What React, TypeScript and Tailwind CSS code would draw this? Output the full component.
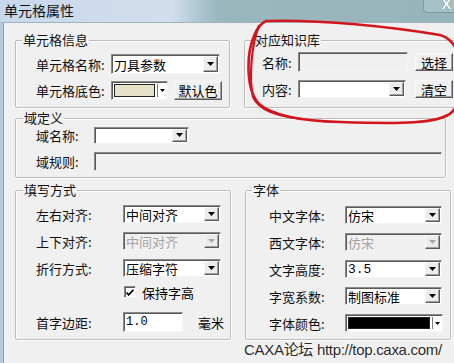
import React from "react";

const sunken =
  "border border-t-[#8a8a8a] border-l-[#8a8a8a] border-r-[#f4f4f4] border-b-[#f4f4f4] shadow-[inset_1px_1px_0_#5a5a5a]";
const raised =
  "border border-t-[#f8f8f8] border-l-[#f8f8f8] border-r-[#5a5a5a] border-b-[#5a5a5a] shadow-[inset_-1px_-1px_0_#a0a0a0]";

function Arrow({ disabled = false }: { disabled?: boolean }) {
  return (
    <svg width="7" height="4" viewBox="0 0 7 4">
      <path d="M0 0h7L3.5 4z" fill={disabled ? "#a8a8a8" : "#000"} />
    </svg>
  );
}

function Combo({
  w,
  h = 18,
  text = "",
  disabled = false,
  mono = false,
}: {
  w: number;
  h?: number;
  text?: string;
  disabled?: boolean;
  mono?: boolean;
}) {
  return (
    <div
      className={`flex shrink-0 items-stretch ${sunken} ${disabled ? "bg-[#f0f0f0]" : "bg-white"}`}
      style={{ width: w, height: h }}
    >
      <div
        className={`flex flex-1 items-center pl-[2px] text-[13px] leading-none ${
          disabled ? "text-[#a3a3a3]" : "text-black"
        } ${mono ? "font-['Liberation_Mono',monospace] text-[12px]" : ""}`}
      >
        {text}
      </div>
      <div className={`m-[1px] flex w-[15px] items-center justify-center bg-[#ececec] ${raised}`}>
        <Arrow disabled={disabled} />
      </div>
    </div>
  );
}

function ColorCombo({ w, h, color }: { w: number; h: number; color: string }) {
  return (
    <div className={`flex shrink-0 items-stretch bg-white ${sunken}`} style={{ width: w, height: h }}>
      <div className="flex flex-1 items-center px-[2px] py-[2px]">
        <div className="h-full w-full border border-[#222]" style={{ background: color }} />
      </div>
      <div className="my-[2px] w-px bg-[#7a7a7a]" />
      <div className="flex w-[9px] items-center justify-center">
        <svg width="5" height="3" viewBox="0 0 5 3">
          <path d="M0 0h5L2.5 3z" fill="#000" />
        </svg>
      </div>
    </div>
  );
}

function Button({ w, h, label }: { w: number; h: number; label: string }) {
  return (
    <div
      className={`flex shrink-0 items-center justify-center bg-[#f0f0f0] text-[13px] leading-none ${raised}`}
      style={{ width: w, height: h }}
    >
      {label}
    </div>
  );
}

function Group({
  title,
  w,
  legendMl,
  className = "",
  children,
}: {
  title: string;
  w: number;
  legendMl: string;
  className?: string;
  children: React.ReactNode;
}) {
  return (
    <fieldset
      className={`shrink-0 rounded-[2px] border border-[#bcbcbc] shadow-[1px_1px_0_#fff,inset_1px_1px_0_#fff] ${className}`}
      style={{ width: w }}
    >
      <legend className={`${legendMl} px-[1px] text-[13px] leading-[16px] text-[#111]`}>{title}</legend>
      {children}
    </fieldset>
  );
}

function Row({ label, lw, h = 18, children }: { label: string; lw: number; h?: number; children?: React.ReactNode }) {
  return (
    <div className="flex items-center" style={{ height: h }}>
      <div className="shrink-0 text-[13px] leading-none text-[#111]" style={{ width: lw }}>
        {label}
      </div>
      {children}
    </div>
  );
}

export default function App() {
  return (
    <div className="relative flex h-[363px] w-[454px] flex-col overflow-hidden bg-[#f0f0f0] font-['Noto_Sans_CJK_SC',sans-serif] text-black">
      {/* title bar */}
      <div className="flex h-[22px] shrink-0 bg-[linear-gradient(90deg,#c8d8eb_0%,#d2deed_38%,#b9cddb_42%,#9ab7be_48%,#97b4ba_100%)]">
        <div className="pl-[4px] pt-[1px] text-[14px] leading-[18px] text-[#111]">单元格属性</div>
        <div className="ml-auto mr-[-12px] flex h-[13px] w-[43px] items-start justify-center overflow-hidden rounded-bl-[4px] border border-t-0 border-[#7d9ba3] bg-[#a6c1c6] pl-[4px] font-['Liberation_Sans',sans-serif] text-[14px] font-bold leading-[8px] text-white [text-shadow:0_0_1px_#34525c]">
          X
        </div>
      </div>

      {/* window body */}
      <div className="flex flex-1 border-l-[3px] border-t border-l-[#b5c9de] border-t-[#9eb2c2]">
        <div className="flex flex-1 flex-col border-l border-[#8c9cab] pl-[11px] pt-[9px]">
          {/* top row */}
          <div className="flex items-stretch gap-[14px]">
            <Group title="单元格信息" w={215} legendMl="ml-[6px]">
              <div className="flex flex-col gap-[6px] pb-[7px] pl-[20px] pt-[6px]">
                <Row label="单元格名称:" lw={75} h={20}>
                  <Combo w={109} h={20} text="刀具参数" />
                </Row>
                <Row label="单元格底色:" lw={75} h={20}>
                  <ColorCombo w={57} h={19} color="#e5e2c9" />
                  <div className="ml-[6px]">
                    <Button w={48} h={19} label="默认色" />
                  </div>
                </Row>
              </div>
            </Group>
            <Group title="对应知识库" w={225} legendMl="ml-[9px]">
              <div className="flex flex-col gap-[7px] pb-[6px] pl-[17px] pt-[4px]">
                <Row label="名称:" lw={36} h={20}>
                  <div className={`h-[20px] w-[110px] bg-[#f0f0f0] ${sunken}`} />
                  <div className="ml-[7px]">
                    <Button w={38} h={18} label="选择" />
                  </div>
                </Row>
                <Row label="内容:" lw={36} h={20}>
                  <Combo w={108} h={18} />
                  <div className="ml-[9px]">
                    <Button w={38} h={18} label="清空" />
                  </div>
                </Row>
              </div>
            </Group>
          </div>

          {/* field definition */}
          <Group title="域定义" w={431} legendMl="ml-[7px]" className="mt-[2px]">
            <div className="flex flex-col gap-[8px] pb-[6px] pl-[20px]">
              <Row label="域名称:" lw={58} h={18}>
                <Combo w={95} h={17} />
              </Row>
              <Row label="域规则:" lw={58} h={19}>
                <div className={`h-[19px] w-[348px] bg-[#f0f0f0] ${sunken}`} />
              </Row>
            </div>
          </Group>

          {/* bottom row */}
          <div className="mt-[4px] flex items-stretch gap-[14px]">
            <Group title="填写方式" w={216} legendMl="ml-[7px]">
              <div className="flex flex-col pb-[7px] pl-[20px] pt-[7px]">
                <Row label="左右对齐:" lw={87}>
                  <Combo w={98} text="中间对齐" />
                </Row>
                <div className="mt-[9px]">
                  <Row label="上下对齐:" lw={87}>
                    <Combo w={98} text="中间对齐" disabled />
                  </Row>
                </div>
                <div className="mt-[9px]">
                  <Row label="折行方式:" lw={87}>
                    <Combo w={98} text="压缩字符" />
                  </Row>
                </div>
                <div className="mt-[6px] flex h-[18px] items-center pl-[88px]">
                  <div className={`flex h-[12px] w-[12px] items-center justify-center bg-white ${sunken}`}>
                    <svg width="8" height="7" viewBox="0 0 8 7">
                      <path d="M0.5 3.5l2.2 2.3L7.5 0.8" fill="none" stroke="#000" strokeWidth="1.8" />
                    </svg>
                  </div>
                  <span className="ml-[6px] text-[13px] leading-none">保持字高</span>
                </div>
                <div className="mt-[11px]">
                  <Row label="首字边距:" lw={87} h={20}>
                    <div
                      className={`flex h-[20px] w-[60px] items-center bg-white pl-[2px] font-['Liberation_Mono',monospace] text-[12px] leading-none ${sunken}`}
                    >
                      1.0
                    </div>
                    <span className="ml-[15px] text-[13px] leading-none">毫米</span>
                  </Row>
                </div>
              </div>
            </Group>
            <Group title="字体" w={206} legendMl="ml-[6px]">
              <div className="flex flex-col gap-[9px] pb-[7px] pl-[23px] pt-[8px]">
                <Row label="中文字体:" lw={76}>
                  <Combo w={97} text="仿宋" />
                </Row>
                <Row label="西文字体:" lw={76}>
                  <Combo w={97} text="仿宋" disabled />
                </Row>
                <Row label="文字高度:" lw={76}>
                  <Combo w={97} text="3.5" mono />
                </Row>
                <Row label="字宽系数:" lw={76}>
                  <Combo w={97} text="制图标准" />
                </Row>
                <Row label="字体颜色:" lw={76}>
                  <ColorCombo w={98} h={18} color="#000" />
                </Row>
              </div>
            </Group>
          </div>
        </div>
      </div>

      {/* forum watermark */}
      <div className="pointer-events-none absolute left-[244px] top-[340px] whitespace-nowrap font-['Liberation_Sans','Noto_Sans_CJK_SC',sans-serif] text-[15px] leading-[20px] tracking-[-0.3px] text-[#2a2a2a] [text-shadow:0_0_2px_#fff,0_0_2px_#fff]">
        CAXA论坛 http://top.caxa.com/
      </div>

      {/* red hand-drawn marker loop */}
      <svg className="pointer-events-none absolute left-0 top-0" width="454" height="363" viewBox="0 0 454 363">
        <path
          d="M266 21 C320 19 392 27 440 35 C466 42 470 92 452 112 C440 124 400 124 340 122 C300 121 272 115 259 104 C246 90 246 55 254 36 C257 28 260 24 266 21"
          fill="none"
          stroke="#d2161e"
          strokeWidth="2.6"
          strokeLinecap="round"
        />
        <path
          d="M259 26 C251 45 249 80 253 97 C259 110 276 116 302 119"
          fill="none"
          stroke="#d2161e"
          strokeWidth="2.2"
          strokeLinecap="round"
        />
      </svg>
    </div>
  );
}
